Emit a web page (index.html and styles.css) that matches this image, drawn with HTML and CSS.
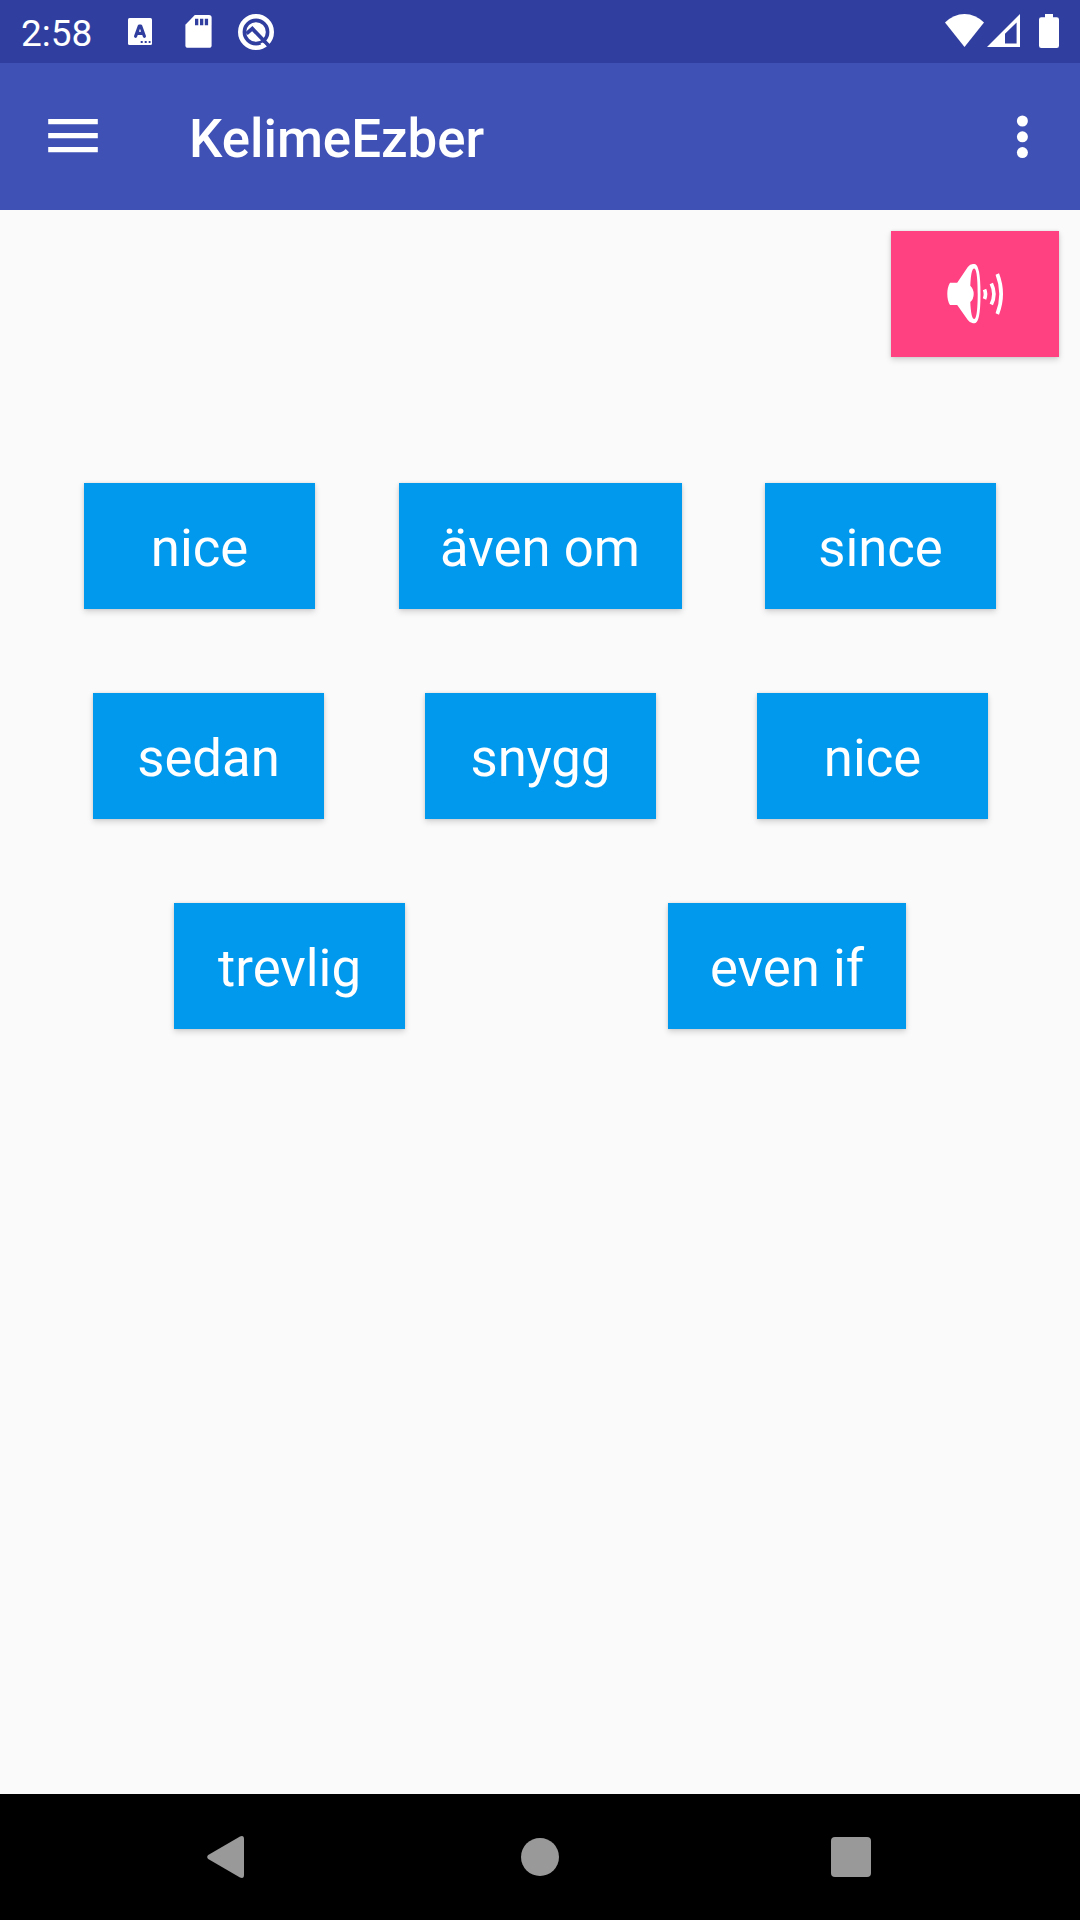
FILE: index.html
```html
<!DOCTYPE html>
<html lang="tr">
<head>
<meta charset="utf-8">
<title>KelimeEzber</title>
<link rel="stylesheet" href="styles.css">
</head>
<body>
<div class="screen">
  <header class="status">
    <span class="clock">2:58</span>
    <div class="notifications">
      <svg class="icon-lang" viewBox="0 0 24 27">
        <rect width="24" height="27" rx="1.5" fill="#fff"/>
        <path d="M7.6 18.3 L11.3 8 H12.7 L16.4 18.3 M9 15.3 H15" fill="none" stroke="#303f9f" stroke-width="3.2" stroke-linecap="round" stroke-linejoin="round"/>
        <path d="M12.7 23h2v2h-2zM16.7 23h2v2h-2zM20.7 23h1.8v2h-1.8z" fill="#303f9f"/>
      </svg>
      <svg class="icon-sd" viewBox="0 0 27 33">
        <path d="M9.8 0H24q2.6 0 2.6 2.6V30.2q0 2.6-2.6 2.6H3Q.4 32.8.4 30.2V9.7z" fill="#fff"/>
        <path d="M10 3.7h3.3v6.6H10zM15 3.7h3.3v6.6H15zM19.8 3.7h3.3v6.6h-3.3z" fill="#303f9f"/>
      </svg>
      <svg class="icon-q" viewBox="0 0 36 36">
        <circle cx="18" cy="18" r="15.7" fill="none" stroke="#fff" stroke-width="4.6"/>
        <circle cx="18" cy="18" r="9.8" fill="#fff"/>
        <path d="M8.5 19.6 L14.3 14.6 L31 32" fill="none" stroke="#303f9f" stroke-width="3.8"/>
        <path d="M22.5 29.5 L24.5 28.5 L27.5 31.5 L24.5 33z" fill="#fff"/>
      </svg>
    </div>
    <div class="system">
      <svg class="icon-wifi" viewBox="0 0 39 33"><path d="M0 8.6Q8.5 0 19.5 0T39 8.6L19.5 33z" fill="#fff"/></svg>
      <svg class="icon-signal" viewBox="0 0 33 33"><path d="M33 0V33H0zM29.6 8.4L18 19.8V29.6H29.6z" fill="#fff" fill-rule="evenodd"/></svg>
      <svg class="icon-battery" viewBox="0 0 20 34"><path d="M6 0H14V3.3H17.7Q20 3.3 20 5.6V31.7Q20 34 17.7 34H2.3Q0 34 0 31.7V5.6Q0 3.3 2.3 3.3H6z" fill="#fff"/></svg>
    </div>
  </header>

  <div class="appbar">
    <svg class="icon-menu" viewBox="0 0 50 35"><path d="M.2 0H49.8V5.2H.2zM.2 14.1H49.8V19.2H.2zM.2 28.1H49.8V33.3H.2z" fill="#fff"/></svg>
    <h1 class="title">KelimeEzber</h1>
    <svg class="icon-more" viewBox="0 0 12 44" fill="#fff"><circle cx="6.4" cy="6" r="5.5"/><circle cx="6.4" cy="21.8" r="5.5"/><circle cx="6.4" cy="37.6" r="5.5"/></svg>
  </div>

  <main class="content">
    <button class="speak" aria-label="Seslendir">
      <svg class="icon-speaker" viewBox="0 0 58 62">
        <path d="M3 19.7H10.2L20.8 4Q23 1 26 1H27.5Q33.5 1.5 33.5 31T27.5 60.2H26Q23 60.2 20.8 57L10.2 42H3Q.3 38 .3 31T3 19.7z" fill="#fff"/>
        <path d="M23.3 22.7Q24 5.5 27.2 5.5C30 6 30.7 19 30.7 31S30 56 27.2 56Q24 56 23.3 39Q26.7 36 26.7 31T23.3 22.7z" fill="#ff4081"/>
        <path d="M37.5 26.5Q39.5 31 37.5 36M44.3 20.5Q49.5 31 44.3 41.5M50.3 11Q58 31 50.3 51" fill="none" stroke="#fff" stroke-width="3.7"/>
      </svg>
    </button>
    <div class="words words-even">
      <button class="word">nice</button>
      <button class="word word-long">även om</button>
      <button class="word">since</button>
    </div>
    <div class="words words-three">
      <button class="word">sedan</button>
      <button class="word">snygg</button>
      <button class="word">nice</button>
    </div>
    <div class="words words-pair">
      <button class="word">trevlig</button>
      <button class="word word-medium">even if</button>
    </div>
  </main>

  <nav class="navbar">
    <svg class="nav-back" viewBox="0 0 37 42"><path d="M33 .5Q37 -1 37 3V39Q37 43 33 41.5L1.2 23Q-.8 21 1.2 19z" fill="#999"/></svg>
    <svg class="nav-home" viewBox="0 0 38 38"><circle cx="19" cy="19" r="19" fill="#999"/></svg>
    <svg class="nav-recent" viewBox="0 0 40 40"><rect width="40" height="40" rx="4" fill="#999"/></svg>
  </nav>
</div>
</body>
</html>
```
FILE: styles.css
```css
* {
  box-sizing: border-box;
}

body {
  margin: 0;
  font-family: Roboto, sans-serif;
  color: #fff;
}

svg {
  display: block;
  flex: none;
}

.screen {
  display: flex;
  flex-direction: column;
  width: 1080px;
  height: 1920px;
  background: #fafafa;
}

.status {
  display: flex;
  align-items: flex-start;
  height: 63px;
  padding: 0 21px;
  background: #303f9f;
}

.clock {
  width: 107px;
  padding-top: 12px;
  font-size: 37px;
  line-height: 44px;
}

.notifications {
  display: flex;
  align-items: center;
  height: 63px;
}

.icon-lang {
  width: 24px;
  height: 27px;
}

.icon-sd {
  width: 27px;
  height: 33px;
  margin-left: 33px;
}

.icon-q {
  width: 36px;
  height: 36px;
  margin-left: 26px;
}

.system {
  display: flex;
  margin-left: auto;
  padding-top: 14px;
}

.icon-wifi {
  width: 39px;
  height: 33px;
}

.icon-signal {
  width: 33px;
  height: 33px;
  margin-left: 3px;
}

.icon-battery {
  width: 20px;
  height: 34px;
  margin-left: 19px;
}

.appbar {
  display: flex;
  align-items: center;
  height: 147px;
  padding: 0 52px 0 48px;
  background: #3f51b5;
}

.icon-menu {
  width: 50px;
  height: 35px;
}

.title {
  flex: 1;
  margin: 0 0 0 91px;
  padding-top: 5px;
  font-size: 52.8px;
  font-weight: 500;
  line-height: 62px;
}

.icon-more {
  width: 12px;
  height: 44px;
}

.content {
  display: flex;
  flex: 1;
  flex-direction: column;
  padding-top: 21px;
}

button {
  height: 126px;
  border: 0;
  color: #fff;
  font-family: inherit;
  box-shadow: 0 3px 6px rgba(0, 0, 0, 0.15), 0 0 3px rgba(0, 0, 0, 0.1);
}

.speak {
  display: flex;
  align-items: center;
  align-self: flex-end;
  justify-content: center;
  width: 168px;
  margin-right: 21px;
  padding: 0 0 0 2px;
  background: #ff4081;
}

.icon-speaker {
  width: 58px;
  height: 62px;
}

.words {
  display: flex;
  margin-top: 84px;
}

.speak + .words {
  margin-top: 126px;
}

.words-even {
  justify-content: space-between;
  padding: 0 84px;
}

.words-three {
  gap: 101px;
  padding-left: 93px;
}

.words-pair {
  justify-content: space-between;
  padding: 0 174px;
}

.word {
  width: 231px;
  padding: 3px 0 0;
  background: #0099ee;
  font-size: 52.7px;
  line-height: 62px;
  white-space: nowrap;
}

.word-long {
  width: 283px;
}

.word-medium {
  width: 238px;
}

.navbar {
  display: flex;
  align-items: center;
  justify-content: space-between;
  height: 126px;
  padding: 0 209px 0 207px;
  background: #000;
}

.nav-back {
  width: 37px;
  height: 42px;
}

.nav-home {
  width: 38px;
  height: 38px;
  margin-left: 5px;
}

.nav-recent {
  width: 40px;
  height: 40px;
}
```
